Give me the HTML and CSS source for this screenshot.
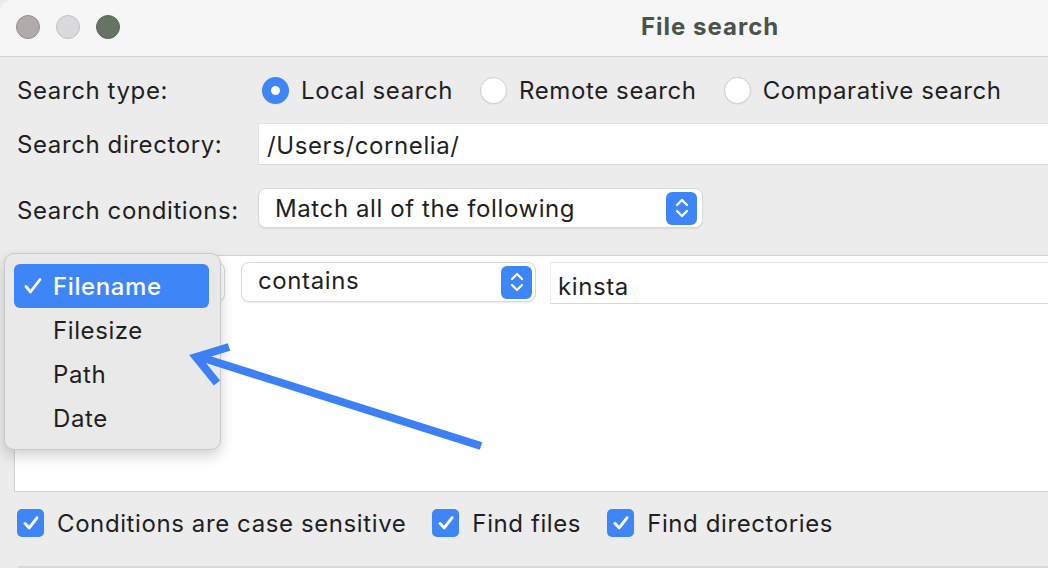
FILE: index.html
```html
<!DOCTYPE html>
<html lang="en">
<head>
<meta charset="utf-8">
<title>File search</title>
<link rel="stylesheet" href="styles.css">
</head>
<body>
<div class="window">
  <div class="titlebar">
    <div class="lights">
      <span class="light close"></span>
      <span class="light min"></span>
      <span class="light max"></span>
    </div>
    <div class="title">File search</div>
  </div>

  <div class="content">
    <div class="row row-type">
      <div class="label">Search type:</div>
      <div class="radios">
        <label class="radio"><span class="dot on"></span>Local search</label>
        <label class="radio"><span class="dot"></span>Remote search</label>
        <label class="radio"><span class="dot"></span>Comparative search</label>
      </div>
    </div>

    <div class="row row-dir">
      <div class="label">Search directory:</div>
      <div class="textfield dir">/Users/cornelia/</div>
    </div>

    <div class="row row-cond">
      <div class="label">Search conditions:</div>
      <div class="select match">
        <span class="select-text">Match all of the following</span>
        <span class="stepper">
          <svg width="20" height="26" viewBox="0 0 20 26"><path d="M5 10 L10 5 L15 10 M5 16 L10 21 L15 16" fill="none" stroke="#fff" stroke-width="2.2" stroke-linecap="round" stroke-linejoin="round"/></svg>
        </span>
      </div>
    </div>

    <div class="condbox">
      <div class="condrow">
        <div class="select field">
          <span class="select-text"></span>
          <span class="stepper">
            <svg width="20" height="26" viewBox="0 0 20 26"><path d="M5 10 L10 5 L15 10 M5 16 L10 21 L15 16" fill="none" stroke="#fff" stroke-width="2.2" stroke-linecap="round" stroke-linejoin="round"/></svg>
          </span>
        </div>
        <div class="select op">
          <span class="select-text">contains</span>
          <span class="stepper">
            <svg width="20" height="26" viewBox="0 0 20 26"><path d="M5 10 L10 5 L15 10 M5 16 L10 21 L15 16" fill="none" stroke="#fff" stroke-width="2.2" stroke-linecap="round" stroke-linejoin="round"/></svg>
          </span>
        </div>
        <div class="textfield value">kinsta</div>
      </div>
    </div>

    <div class="checks">
      <label class="check"><span class="box"><svg width="20" height="20" viewBox="0 0 20 20"><path d="M4 10.5 L8.2 14.8 L16 4.8" fill="none" stroke="#fff" stroke-width="3" stroke-linecap="round" stroke-linejoin="round"/></svg></span>Conditions are case sensitive</label>
      <label class="check"><span class="box"><svg width="20" height="20" viewBox="0 0 20 20"><path d="M4 10.5 L8.2 14.8 L16 4.8" fill="none" stroke="#fff" stroke-width="3" stroke-linecap="round" stroke-linejoin="round"/></svg></span>Find files</label>
      <label class="check"><span class="box"><svg width="20" height="20" viewBox="0 0 20 20"><path d="M4 10.5 L8.2 14.8 L16 4.8" fill="none" stroke="#fff" stroke-width="3" stroke-linecap="round" stroke-linejoin="round"/></svg></span>Find directories</label>
    </div>
    <div class="bottomline"></div>
  </div>

  <div class="menu">
    <div class="item selected">
      <svg class="tick" width="18" height="18" viewBox="0 0 18 18"><path d="M2 9.5 L6.5 15 L16 2.5" fill="none" stroke="#fff" stroke-width="2.8" stroke-linecap="round" stroke-linejoin="round"/></svg>
      Filename
    </div>
    <div class="item">Filesize</div>
    <div class="item">Path</div>
    <div class="item">Date</div>
  </div>

  <svg class="arrow" width="1048" height="568" viewBox="0 0 1048 568">
    <g fill="none" stroke="#3d80f5" stroke-width="8" stroke-linejoin="miter">
      <path d="M481 446 L200 357"/>
      <path d="M229 347 L196 357 L217 383" stroke-linecap="butt"/>
    </g>
  </svg>
</div>
</body>
</html>
```

FILE: styles.css
```css
* { box-sizing: border-box; }

html, body {
  margin: 0;
  padding: 0;
  background: #ececec;
}

body {
  font-family: Inter, "Noto Sans", "Liberation Sans", sans-serif;
  font-size: 24px;
  letter-spacing: 0.6px;
  color: #1f1f1f;
}

.window {
  position: relative;
  width: 1048px;
  height: 568px;
  overflow: hidden;
  background: #ececec;
}

/* Title bar */
.titlebar {
  height: 57px;
  background: #f6f6f6;
  border-bottom: 1px solid #d6d4d6;
  border-top-left-radius: 12px;
  display: flex;
  align-items: center;
  padding-left: 16px;
  padding-bottom: 3px;
}

.lights {
  display: flex;
  gap: 16px;
}

.light {
  width: 24px;
  height: 24px;
  border-radius: 50%;
  display: block;
}

.light.close { background: #b3abab; border: 1px solid #958d8d; }
.light.min { background: #dadadc; border: 1px solid #c2c2c4; }
.light.max { background: #657463; border: 1px solid #5a6859; }

.title {
  margin-left: 521px;
  font-weight: 700;
  font-size: 24px;
  color: #4a5449;
  letter-spacing: 1px;
}

/* Content */
.content {
  display: flex;
  flex-direction: column;
}

.row {
  display: flex;
  align-items: center;
}

.label {
  width: 258px;
  padding-left: 17px;
  flex-shrink: 0;
}

.row-type {
  margin-top: 13px;
  height: 40px;
}

.radios {
  display: flex;
  margin-left: 4px;
  gap: 27px;
}

.radio {
  display: flex;
  align-items: center;
  gap: 12px;
}

.dot {
  width: 27px;
  height: 27px;
  border-radius: 50%;
  background: #fff;
  border: 1px solid #cfcfcf;
  display: block;
  box-shadow: 0 0.5px 1px rgba(0,0,0,0.08);
}

.dot.on {
  border: 9px solid #3e86f7;
  background: #fff;
}

.row-dir {
  margin-top: 13px;
  height: 42px;
}

.textfield {
  background: #fff;
  border-top: 1px solid #e3e3e3;
  border-bottom: 1px solid #d8d8d8;
  display: flex;
  align-items: center;
}

.textfield.dir {
  flex: 1;
  height: 42px;
  padding-left: 8px;
  padding-top: 2px;
  margin-right: -20px;
  border-left: 1px solid #e3e3e3;
}

.row-cond {
  margin-top: 23px;
  height: 40px;
}

.row-cond .label {
  padding-top: 4px;
}

.select {
  background: #fff;
  border: 1px solid #d9d9d9;
  border-radius: 8px;
  height: 40px;
  display: flex;
  align-items: center;
  box-shadow: 0 1px 1.5px rgba(0,0,0,0.08);
}

.select-text {
  flex: 1;
}

.select.match {
  width: 445px;
  padding-left: 16px;
  padding-right: 5px;
}

.stepper {
  width: 31px;
  height: 33px;
  border-radius: 6px;
  background: #3e86f7;
  display: flex;
  align-items: center;
  justify-content: center;
}

/* Condition box */
.condbox {
  margin-top: 27px;
  margin-left: 14px;
  margin-right: -20px;
  height: 237px;
  background: #fff;
  border: 1px solid #d4d1d3;
  border-right: none;
}

.condrow {
  display: flex;
  align-items: flex-start;
  padding-top: 6px;
}

.select.field {
  margin-left: 5px;
  width: 205px;
  padding-left: 14px;
  padding-right: 3px;
}

.select.op {
  margin-left: 16px;
  width: 295px;
  padding-left: 16px;
  padding-right: 3px;
}

.select.op .select-text {
  padding-bottom: 3px;
}

.textfield.value {
  margin-left: 14px;
  flex: 1;
  height: 42px;
  padding-left: 7px;
  padding-top: 6px;
  border-left: 1px solid #ececec;
}

/* Checkboxes */
.checks {
  height: 62px;
  display: flex;
  align-items: center;
  padding-left: 17px;
  gap: 26px;
}

.check {
  display: flex;
  align-items: center;
  gap: 13px;
}

.box {
  width: 27px;
  height: 28px;
  border-radius: 5px;
  background: #3e86f7;
  display: flex;
  align-items: center;
  justify-content: center;
}

.bottomline {
  margin-top: 12px;
  margin-left: 18px;
  height: 2px;
  background: #d9d9d9;
}

/* Popup menu (overlay) */
.menu {
  position: absolute;
  left: 4px;
  top: 253px;
  width: 217px;
  height: 197px;
  background: #e9e9e9;
  border: 1px solid #c9c7c9;
  border-radius: 10px;
  box-shadow: 0 6px 14px rgba(0,0,0,0.18);
  padding: 10px 11px 0 9px;
}

.item {
  height: 44px;
  display: flex;
  align-items: center;
  padding-left: 39px;
  position: relative;
  color: #1f1f1f;
}

.item.selected {
  background: #3e86f7;
  color: #fff;
  border-radius: 6px;
  font-weight: 500;
}

.tick {
  position: absolute;
  left: 10px;
  top: 13px;
}

.arrow {
  position: absolute;
  left: 0;
  top: 0;
  pointer-events: none;
}
```
